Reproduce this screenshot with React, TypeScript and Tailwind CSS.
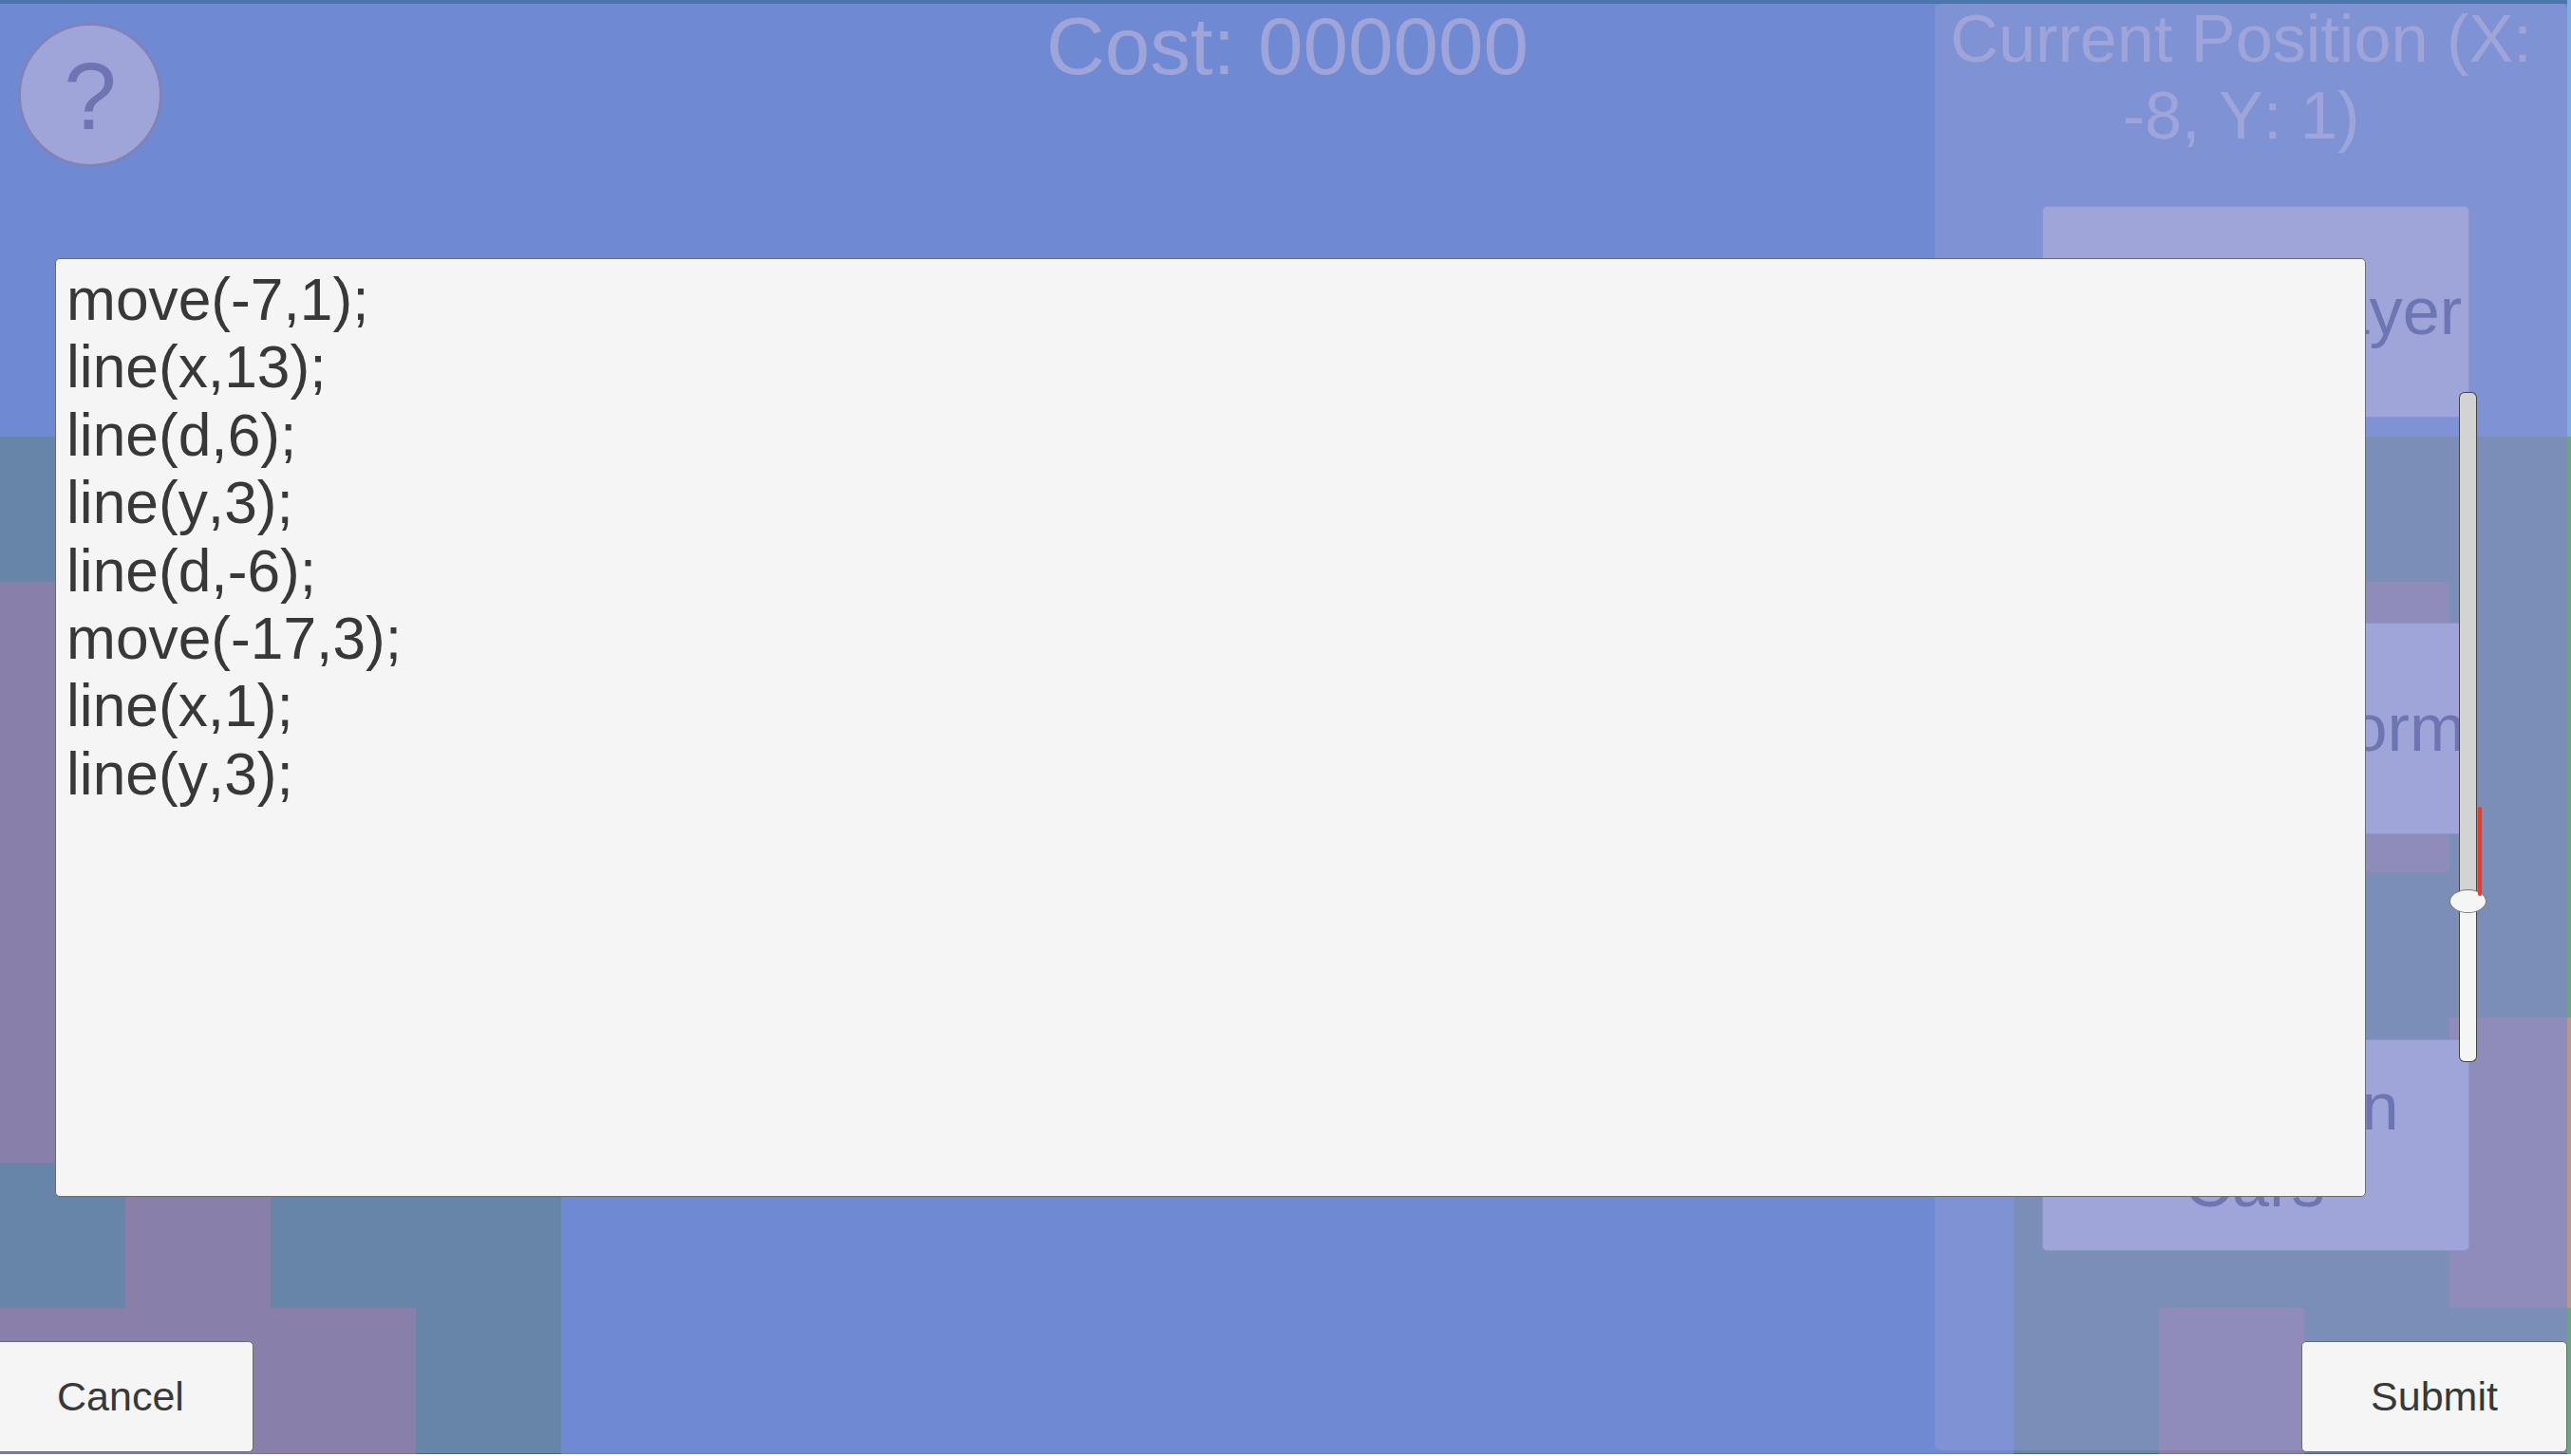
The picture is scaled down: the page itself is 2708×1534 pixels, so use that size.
const tileRows = [
  "SSSSSSSSSSSSSSSSSS",
  "SSSSSSSSSSSSSSSSSS",
  "SSSSSSSSSSSSSSSSSS",
  "GGGGSSSSSSSSSSGGGG",
  "PGGGSSSSSSSSSSGGPG",
  "PGGGSSSSSSSSSSGGPG",
  "PGGGSSSSSSSSSSGGGG",
  "PGGGSSSSSSSSSSGGGP",
  "GPGGSSSSSSSSSSGGGP",
  "PPPGSSSSSSSSSSGPGG",
  "PPPGSSSSSSSSSSGPGG",
];

const tileClass: Record<string, string> = {
  S: "bg-[#4a8cd8]",
  G: "bg-[#2f7d4b]",
  P: "bg-[#9d6e50]",
};

const code = [
  "move(-7,1);",
  "line(x,13);",
  "line(d,6);",
  "line(y,3);",
  "line(d,-6);",
  "move(-17,3);",
  "line(x,1);",
  "line(y,3);",
];

const MenuButton = ({ label, className = "" }: { label: string; className?: string }) => (
  <button className={`ml-[113px] w-[450px] h-[223px] shrink-0 flex items-center justify-center text-center text-[70.2px] leading-[80.5px] text-[#6e75b3] bg-[#a0a5d9] border border-[#8f94cc] rounded-[5px] ${className}`}>
    {label}
  </button>
);

const DialogButton = ({ label }: { label: string }) => (
  <button className="w-[280px] h-[117px] flex items-center justify-center text-[43px] text-[#383838] bg-[#f5f5f5] border border-[#6b6b6b] rounded-[5px]">
    {label}
  </button>
);

export default function App() {
  return (
    <div className="relative w-[2708px] h-[1532px] overflow-hidden bg-[#4a8cd8] leading-[1.15] [font-kerning:none] font-['Liberation_Sans',sans-serif]">
      {/* tile map */}
      <div className="ml-[-21px] mt-px grid grid-cols-[repeat(18,153px)] auto-rows-[153px]">
        {tileRows.map((row, r) =>
          row.split("").map((t, c) => <div key={`${r}-${c}`} className={tileClass[t]} />)
        )}
      </div>

      {/* right edge, only partly faded */}
      <div className="absolute top-0 right-0 bottom-0 w-[4px] bg-white/30" />

      {/* hud, faded over the map */}
      <div className="absolute left-0 top-0 w-[2704px] h-[1531px] bg-[#7f88d1]/70 border-t-4 border-[#4a76aa] flex">
        <div className="w-[2038px] flex items-start">
          <button className="ml-[19px] mt-[20px] w-[152px] h-[152px] shrink-0 rounded-full bg-[#a0a5d9] border-[3px] border-[#8083ba] flex items-center justify-center text-[100px] text-[#6e75b3] pt-[3px]">
            ?
          </button>
          <div className="ml-[931px] mt-[-4px] text-[85.4px] text-[#a0a5d9] whitespace-nowrap">Cost: 000000</div>
        </div>
        <div className="w-[666px] h-[1524px] bg-[#a0a5d9]/33 rounded-[6px] flex flex-col">
          <div className="w-[645px] mt-[-3px] text-center text-[70.2px] leading-[80.5px] text-[#a0a5d9]">Current Position (X: -8, Y: 1)</div>
          <div className="mt-[55px] flex flex-col gap-[216px]">
            <MenuButton label="Current Layer" className="pl-[5px]" />
            <MenuButton label="Train Platform" />
            <MenuButton label="Add Train Cars" className="pr-[3px]" />
          </div>
        </div>
      </div>

      {/* code dialog */}
      <div className="absolute left-[58px] top-[272px] w-[2434px] h-[989px] bg-[#f5f5f5] border border-[#6b6b6b] rounded-[5px] pl-[11px] pt-[7px] text-[62.3px] leading-[71.4px] text-[#383838]">
        {code.map((line, i) => (
          <div key={i}>{line}</div>
        ))}
      </div>

      {/* scrollbar */}
      <div className="absolute left-[2590px] top-[413px] w-[19px] h-[706px] flex flex-col">
        <div className="h-[534px] bg-[#d3d3d3] border-x border-t border-[#444444] rounded-t-[6px]" />
        <div className="flex-1 bg-[#f5f5f5] border-x border-b border-[#444444] rounded-b-[6px]" />
      </div>
      <div className="absolute left-[2580px] top-[937px] w-[39px] h-[25px] rounded-[50%] bg-[#f5f5f5] border border-[#777777]" />
      <div className="absolute left-[2610px] top-[850px] w-[4px] h-[94px] rounded-[2px] bg-[#ee3a2c]" />

      {/* dialog actions */}
      <div className="absolute left-[-13px] top-[1413px] w-[2717px] flex justify-between">
        <DialogButton label="Cancel" />
        <DialogButton label="Submit" />
      </div>
    </div>
  );
}
